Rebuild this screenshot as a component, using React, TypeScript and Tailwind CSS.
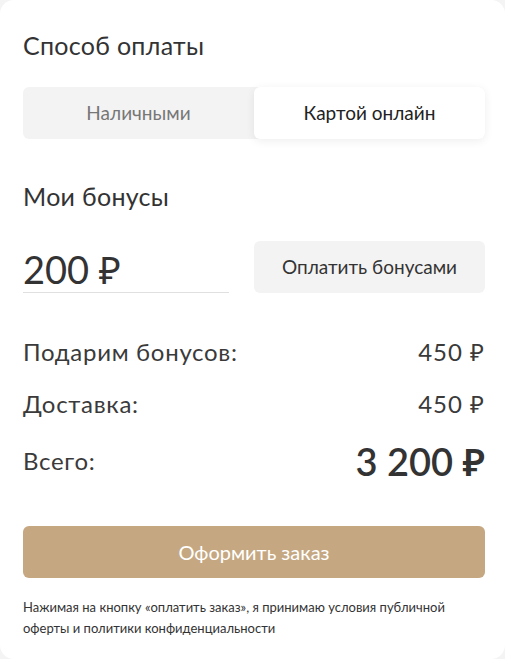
import React from "react";

export default function App() {
  const font = { fontFamily: "Lato, 'Noto Sans', sans-serif" };
  return (
    <div className="w-[505px] h-[659px] bg-[#f4f4f4]" style={font}>
      <div className="w-[505px] h-[659px] bg-white rounded-[14px] pl-[23px] pr-[20px] pt-[30px] flex flex-col text-[#333]">
        <h2 className="text-[25px] leading-[30px] tracking-[0.3px] text-[#333]">Способ оплаты</h2>
        <div className="mt-[27px] flex h-[52px] rounded-[6px] bg-[#f3f3f3]">
          <button className="flex-1 text-[19px] text-[#777] flex items-center justify-center">Наличными</button>
          <button className="flex-1 text-[19px] text-[#222] bg-white rounded-[6px] shadow-[0_2px_10px_rgba(0,0,0,0.07)] flex items-center justify-center">
            Картой онлайн
          </button>
        </div>
        <h2 className="mt-[42px] text-[25px] leading-[30px] tracking-[0.3px] text-[#333]">Мои бонусы</h2>
        <div className="mt-[30px] flex items-center gap-[25px]">
          <div className="w-[206px] border-b border-[#e0e0e0] h-[52px] flex items-center pt-[4px]">
            <span className="text-[38px] leading-[40px] text-[#333]">200 ₽</span>
          </div>
          <button className="flex-1 h-[52px] rounded-[6px] bg-[#f3f3f3] text-[19px] text-[#333] flex items-center justify-center">
            Оплатить бонусами
          </button>
        </div>
        <div className="mt-[40px] flex flex-col">
          <div className="flex justify-between items-center h-[38px]">
            <span className="text-[24px] tracking-[0.7px] text-[#3a3a3a]">Подарим бонусов:</span>
            <span className="text-[24px] tracking-[1px] text-[#3a3a3a]">450 ₽</span>
          </div>
          <div className="flex justify-between items-center h-[38px] mt-[14px]">
            <span className="text-[24px] tracking-[0.7px] text-[#3a3a3a]">Доставка:</span>
            <span className="text-[24px] tracking-[1px] text-[#3a3a3a]">450 ₽</span>
          </div>
          <div className="flex justify-between items-center h-[44px] mt-[16px]">
            <span className="text-[24px] tracking-[0.7px] text-[#3a3a3a]">Всего:</span>
            <span className="text-[38px] font-semibold text-[#333]">3 200 ₽</span>
          </div>
        </div>
        <button className="mt-[43px] h-[52px] rounded-[6px] bg-[#c5a882] text-white text-[20px] flex items-center justify-center">
          Оформить заказ
        </button>
        <p className="mt-[19px] text-[13px] leading-[21px] text-[#333]">
          Нажимая на кнопку «оплатить заказ», я принимаю условия публичной оферты и политики конфиденциальности
        </p>
      </div>
    </div>
  );
}
